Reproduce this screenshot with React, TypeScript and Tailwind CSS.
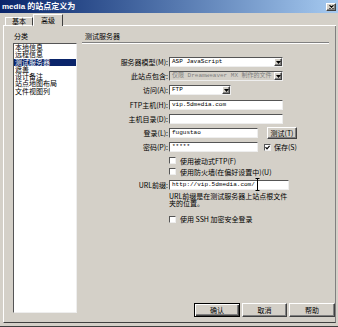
import React from "react";

const raised =
  "border border-t-white border-l-white border-r-[#404040] border-b-[#404040] shadow-[inset_-1px_-1px_0_#808080]";
const sunken =
  "border border-t-[#555555] border-l-[#555555] border-r-[#eeeeee] border-b-[#eeeeee]";
const mono = "[font-family:'Liberation_Mono','Noto_Sans_CJK_SC',monospace]";

function Arrow() {
  return (
    <div className={`w-[8px] h-[8px] bg-[#d4d0c8] ${raised} flex items-center justify-center`}>
      <svg width="5" height="3" viewBox="0 0 5 3">
        <path d="M0 0 H5 L2.5 3 Z" fill="#000" />
      </svg>
    </div>
  );
}

function Select({ w, text, disabled }: { w: string; text: string; disabled?: boolean }) {
  return (
    <div
      className={`flex items-center h-[10px] ${w} ${disabled ? "bg-[#d4d0c8] text-[#808080]" : "bg-white text-black"} ${sunken}`}
    >
      <span className={`flex-1 overflow-hidden whitespace-nowrap pl-[2px] text-[6px] leading-[8px] ${mono}`}>
        {text}
      </span>
      <Arrow />
    </div>
  );
}

function Input({ w, text }: { w: string; text?: string }) {
  return (
    <div className={`flex items-center h-[10px] bg-white ${w} ${sunken}`}>
      <span className={`whitespace-nowrap pl-[2px] text-[6px] leading-[8px] ${mono}`}>{text}</span>
    </div>
  );
}

function Check({ checked }: { checked?: boolean }) {
  return (
    <div className={`w-[7px] h-[7px] bg-white ${sunken} flex items-center justify-center shrink-0`}>
      {checked && (
        <svg width="5" height="5" viewBox="0 0 5 5">
          <path d="M0.5 2.2 L2 3.8 L4.6 0.8" stroke="#000" strokeWidth="1.2" fill="none" />
        </svg>
      )}
    </div>
  );
}

function Row({ label, children }: { label: string; children: React.ReactNode }) {
  return (
    <div className="flex items-center h-[14.2px]">
      <div className="w-[87px] text-right pr-[1px] whitespace-nowrap leading-[10px]">{label}</div>
      {children}
    </div>
  );
}

function CheckRow({ label, checked, className }: { label: string; checked?: boolean; className?: string }) {
  return (
    <div className={`flex items-center h-[11px] pl-[87px] ${className ?? ""}`}>
      <Check checked={checked} />
      <span className="ml-[4px] whitespace-nowrap leading-[10px]">{label}</span>
    </div>
  );
}

const items = ["本地信息", "远程信息", "测试服务器", "遮盖", "设计备注", "站点地图布局", "文件视图列"];

export default function App() {
  return (
    <div className="w-[338px] h-[327px] bg-[#d4d0c8] flex flex-col border-b border-[#404040] overflow-hidden text-[7px] text-black [font-family:'Noto_Sans_CJK_SC','Noto_Sans',sans-serif]">
      {/* title bar */}
      <div className="h-[13px] shrink-0 flex items-center bg-linear-to-r from-[#0a246a] to-[#a6caf0]">
        <span className="pl-[2px] text-[8px] font-bold text-white leading-[13px] [font-family:'Liberation_Sans','Noto_Sans_CJK_SC',sans-serif]">
          media 的站点定义为
        </span>
        <div className={`ml-auto mr-[2px] w-[10px] h-[8px] bg-[#d4d0c8] ${raised} flex items-center justify-center`}>
          <svg width="5" height="4" viewBox="0 0 5 4">
            <path d="M0.5 0.3 L4.5 3.7 M4.5 0.3 L0.5 3.7" stroke="#000" strokeWidth="1.1" />
          </svg>
        </div>
      </div>

      {/* tabs */}
      <div className="h-[13px] shrink-0 ml-[3px] mr-[2px] flex items-end">
        <div className="w-[2px] h-full border-b border-white" />
        <div className="w-[28px] h-[9px] border-t border-l border-r border-t-white border-l-white border-r-[#404040] border-b border-b-white flex items-center justify-center leading-[7px]">
          基本
        </div>
        <div className="w-[30px] h-[12px] border-t border-l border-r border-t-white border-l-white border-r-[#404040] flex items-center justify-center leading-[8px] pb-[1px]">
          高级
        </div>
        <div className="flex-1 h-full border-b border-white" />
      </div>

      {/* panel */}
      <div className="flex-1 ml-[3px] mr-[2px] mb-[3px] border-l border-l-white border-r border-r-[#808080] border-b border-b-[#404040] flex">
        {/* left column */}
        <div className="w-[78px] pl-[9px] pt-[5px] flex flex-col">
          <div className="h-[10px] leading-[10px] pl-[1px]">分类</div>
          <div className={`mt-[2px] w-[64px] h-[270px] bg-white ${sunken}`}>
            {items.map((it, i) => (
              <div
                key={it}
                className={`h-[7.3px] leading-[7.3px] pl-[1px] whitespace-nowrap ${i === 2 ? "bg-[#0a246a] text-white" : ""}`}
              >
                {it}
              </div>
            ))}
          </div>
        </div>

        {/* right column */}
        <div className="flex-1 flex flex-col pt-[5px]">
          <div className="h-[10px] leading-[10px] pl-[3px]">测试服务器</div>
          <div className="mt-[1px] mr-[6px] h-[2px] border-t border-t-[#808080] border-b border-b-white" />

          <div className="mt-[11px] flex flex-col">
            <Row label="服务器模型(M):">
              <Select w="w-[114px]" text="ASP JavaScript" />
            </Row>
            <Row label="此站点包含:">
              <Select w="w-[114px]" text="仅限 Dreamweaver MX 制作的文件" disabled />
            </Row>
            <Row label="访问(A):">
              <Select w="w-[62px]" text="FTP" />
            </Row>
            <Row label="FTP主机(H):">
              <Input w="w-[114px]" text="vip.5dmedia.com" />
            </Row>
            <Row label="主机目录(D):">
              <Input w="w-[114px]" />
            </Row>
            <Row label="登录(L):">
              <Input w="w-[89px]" text="fugustao" />
              <div className={`ml-[9px] w-[30px] h-[12px] ${raised} flex items-center justify-center whitespace-nowrap leading-[8px]`}>
                测试(T)
              </div>
            </Row>
            <Row label="密码(P):">
              <Input w="w-[89px]" text="*****" />
              <div className="ml-[6px] flex items-center">
                <Check checked />
                <span className="ml-[3px] whitespace-nowrap leading-[10px]">保存(S)</span>
              </div>
            </Row>
          </div>

          <CheckRow label="使用被动式FTP(F)" className="mt-[1px]" />
          <CheckRow label="使用防火墙(在偏好设置中)(U)" />

          <div className="flex items-center h-[14px] mt-[0.5px]">
            <div className="w-[87px] text-right pr-[1px] whitespace-nowrap leading-[10px]">URL前缀:</div>
            <div className={`flex items-center h-[10px] w-[120px] bg-white ${sunken}`}>
              <span className={`whitespace-nowrap pl-[2px] text-[6px] leading-[8px] ${mono}`}>
                http://vip.5dmedia.com/
              </span>
              <svg width="5" height="13" viewBox="0 0 5 13" className="ml-[0.5px] -my-[2px] overflow-visible">
                <path d="M0.5 0.5 H4.5 M2.5 0.5 V12.5 M0.5 12.5 H4.5" stroke="#000" strokeWidth="1" fill="none" />
              </svg>
            </div>
          </div>

          <div className="pl-[87px] mt-[1.5px] leading-[6.7px] whitespace-nowrap">
            URL前缀是在测试服务器上站点根文件
            <br />
            夹的位置。
          </div>

          <CheckRow label="使用 SSH 加密安全登录" className="mt-[7px]" />

          <div className="mt-auto mb-[5px] flex justify-end gap-[2px]">
            <div className="w-[46px] h-[14px] border border-black shadow-[inset_1px_1px_0_#ffffff,inset_-1px_-1px_0_#404040,inset_-2px_-2px_0_#808080] flex items-center justify-center leading-[8px]">
              确认
            </div>
            <div className={`w-[45px] h-[14px] ${raised} flex items-center justify-center leading-[8px]`}>取消</div>
            <div className={`w-[46px] h-[14px] ${raised} flex items-center justify-center leading-[8px]`}>帮助</div>
          </div>
        </div>
      </div>
    </div>
  );
}
